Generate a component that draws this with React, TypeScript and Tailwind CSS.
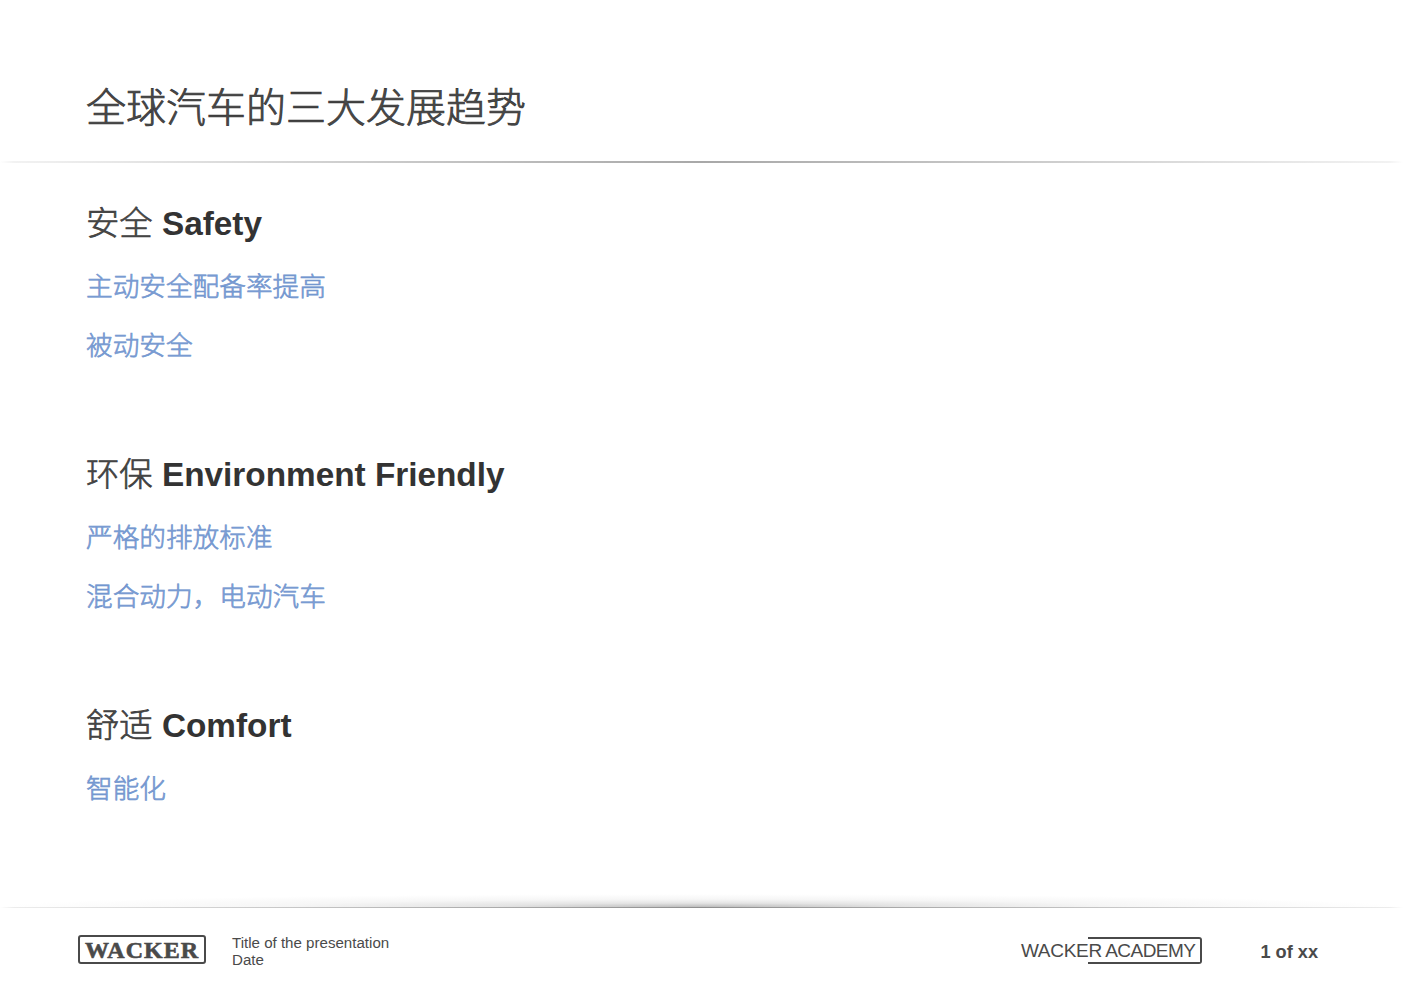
const cjk = "font-['Noto_Sans_CJK_SC',sans-serif]";

function Section({ icon, label, items }: { icon: string; label: string; items: string[] }) {
    return (
        <section>
            <h2 className="h-[44px] text-[33.33px] leading-[44px] font-bold text-[#333333] whitespace-pre">
                <span className={`${cjk} font-light text-[#4a4a4a] [-webkit-text-stroke:0.6px_#333333]`}>{icon}</span>{" "}
                {label}
            </h2>
            <div className="mt-[24px] flex flex-col gap-[22.5px]">
                {items.map((item) => (
                    <p
                        key={item}
                        className={`${cjk} h-[36px] text-[26.67px] leading-[36px] font-light text-[#7fa0d4] [-webkit-text-stroke:0.6px_#6b91cd]`}
                    >
                        {item}
                    </p>
                ))}
            </div>
        </section>
    );
}

export default function App() {
    return (
        <div className="w-[1403px] h-[992px] bg-white flex flex-col overflow-hidden font-['Liberation_Sans',sans-serif]">
            <header className="h-[161px] pl-[86px] pt-[77px]">
                <h1
                    className={`${cjk} text-[40px] leading-[56px] font-light text-[#4a4a4a] [-webkit-text-stroke:0.7px_#333333]`}
                >
                    全球汽车的三大发展趋势
                </h1>
            </header>
            <div className="h-[2px] bg-[linear-gradient(90deg,#ffffff,#f2f2f2_1%,#a8a8a8_50%,#f2f2f2_99%,#ffffff)]" />

            <main className="flex-1 pl-[86px] pt-[36px] flex flex-col gap-[88.5px]">
                <Section icon="安全" label="Safety" items={["主动安全配备率提高", "被动安全"]} />
                <Section
                    icon="环保"
                    label="Environment Friendly"
                    items={["严格的排放标准", "混合动力，电动汽车"]}
                />
                <Section icon="舒适" label="Comfort" items={["智能化"]} />
            </main>

            <div className="h-[13px] bg-[radial-gradient(50%_100%_at_50%_100%,#bcbcbc,#e4e4e4_30%,#f6f6f6_60%,#ffffff_100%)]" />
            <div className="h-px bg-[linear-gradient(90deg,#ffffff,#ececec_1%,#8f8f8f_50%,#ececec_99%,#ffffff)]" />

            <footer className="h-[84px] flex items-start pt-[27px] text-[#4a4a4a]">
                <div className="ml-[78px] w-[128px] h-[29px] border-2 border-[#4a4a4a] rounded-[3px] flex items-center justify-center font-['Liberation_Serif',serif] font-bold text-[24px] leading-none tracking-[1px] [-webkit-text-stroke:0.6px_#4a4a4a]">
                    WACKER
                </div>
                <div className="ml-[26px] mt-[-1px] text-[15.1px] leading-[17px]">
                    <div>Title of the presentation</div>
                    <div>Date</div>
                </div>
                <div className="ml-auto flex items-center text-[19px] leading-none mt-[2px]">
                    <span className="tracking-[-0.3px]">WACKE</span>
                    <span className="w-[114px] h-[27px] flex items-center whitespace-pre tracking-[-0.55px] border-2 border-l-0 border-[#4a4a4a] rounded-r-[3px]">
                        R ACADEMY
                    </span>
                </div>
                <div className="ml-[58px] mr-[85px] mt-[7px] text-[18.2px] leading-[20px] font-bold">1 of xx</div>
            </footer>
        </div>
    );
}
